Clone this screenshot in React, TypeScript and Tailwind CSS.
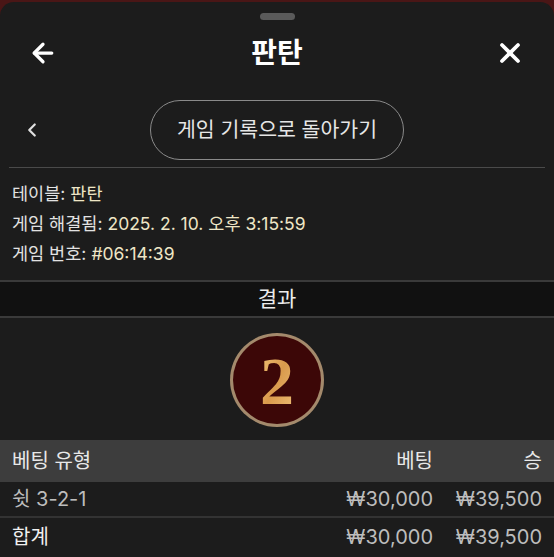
import { ArrowLeft, ChevronLeft, X } from "lucide-react";

const font = { fontFamily: "Inter, 'Noto Sans CJK KR', sans-serif" };

interface InfoLineProps {
  label: string;
  value: string;
}

function InfoLine({ label, value }: InfoLineProps) {
  return (
    <div className="h-[30px] flex items-center text-[17.5px]">
      <span className="text-[#e2e2e2]">{label}:</span>
      <span className="ml-[5px] text-[#efe6c6]">{value}</span>
    </div>
  );
}

function ResultBall() {
  return (
    <div className="w-[94px] h-[94px] rounded-full bg-[#a48a6c] p-[3px]">
      <div className="w-full h-full rounded-full bg-[#3c0707] flex items-center justify-center">
        <svg width="70" height="80" viewBox="0 0 70 80" overflow="visible">
          <defs>
            <linearGradient id="gold" x1="0" y1="0" x2="1" y2="1">
              <stop offset="0%" stopColor="#f3c77c" />
              <stop offset="50%" stopColor="#d99a4c" />
              <stop offset="100%" stopColor="#f0c27a" />
            </linearGradient>
          </defs>
          <text
            x="35"
            y="64"
            textAnchor="middle"
            fontSize="68"
            fontWeight="bold"
            fontFamily="'Liberation Serif', 'DejaVu Serif', serif"
            fill="url(#gold)"
          >
            2
          </text>
        </svg>
      </div>
    </div>
  );
}

export default function App() {
  return (
    <div className="w-[554px] h-[557px] bg-[#4a1616] overflow-hidden" style={font}>
      <div className="mt-[2px] h-full bg-[#1c1c1c] rounded-t-[14px] flex flex-col">
        <div className="pt-[11px] flex justify-center">
          <div className="w-[35px] h-[7px] rounded-full bg-[#5a5a5a]" />
        </div>

        <div className="h-[66px] grid grid-cols-[1fr_auto_1fr] items-center px-[28px]">
          <ArrowLeft className="text-white justify-self-start" size={30} strokeWidth={2.6} />
          <h1 className="text-white text-[28px] font-bold">판탄</h1>
          <X className="text-white justify-self-end" size={32} strokeWidth={2.8} />
        </div>

        <div className="mt-[14px] h-[60px] grid grid-cols-[1fr_auto_1fr] items-center">
          <ChevronLeft className="text-[#e0e0e0] ml-[21px]" size={22} strokeWidth={2.4} />
          <button className="h-[60px] px-[26px] rounded-full border border-[#8a8a8a] text-[20.5px] text-[#e6e6e6]">
            게임 기록으로 돌아가기
          </button>
          <div />
        </div>

        <div className="mt-[7px] mx-[9px] h-px bg-[#4a4a4a]" />

        <div className="px-[12px] pt-[11px] pb-[11px]">
          <InfoLine label="테이블" value="판탄" />
          <InfoLine label="게임 해결됨" value="2025. 2. 10. 오후 3:15:59" />
          <InfoLine label="게임 번호" value="#06:14:39" />
        </div>

        <div className="h-[38px] border-y-2 border-[#3a3a3a] bg-[#111111] flex items-center justify-center">
          <span className="text-[21px] text-[#ececec]">결과</span>
        </div>

        <div className="pt-[15px] pb-[13px] flex justify-center">
          <ResultBall />
        </div>

        <div className="text-[20px]">
          <div className="h-[42px] bg-[#3d3d3d] grid grid-cols-[1fr_auto_109px] items-center px-[12px] text-[#e8e8e8]">
            <span>베팅 유형</span>
            <span className="text-right">베팅</span>
            <span className="text-right">승</span>
          </div>
          <div className="h-[36px] grid grid-cols-[1fr_auto_109px] items-center px-[12px] text-[#bdbdbd] border-b-2 border-[#333333]">
            <span>쉿 3-2-1</span>
            <span className="text-right">₩30,000</span>
            <span className="text-right">₩39,500</span>
          </div>
          <div className="h-[38px] grid grid-cols-[1fr_auto_109px] items-center px-[12px] text-[#f0f0f0]">
            <span>합계</span>
            <span className="text-right text-[#bdbdbd]">₩30,000</span>
            <span className="text-right text-[#bdbdbd]">₩39,500</span>
          </div>
        </div>
      </div>
    </div>
  );
}
